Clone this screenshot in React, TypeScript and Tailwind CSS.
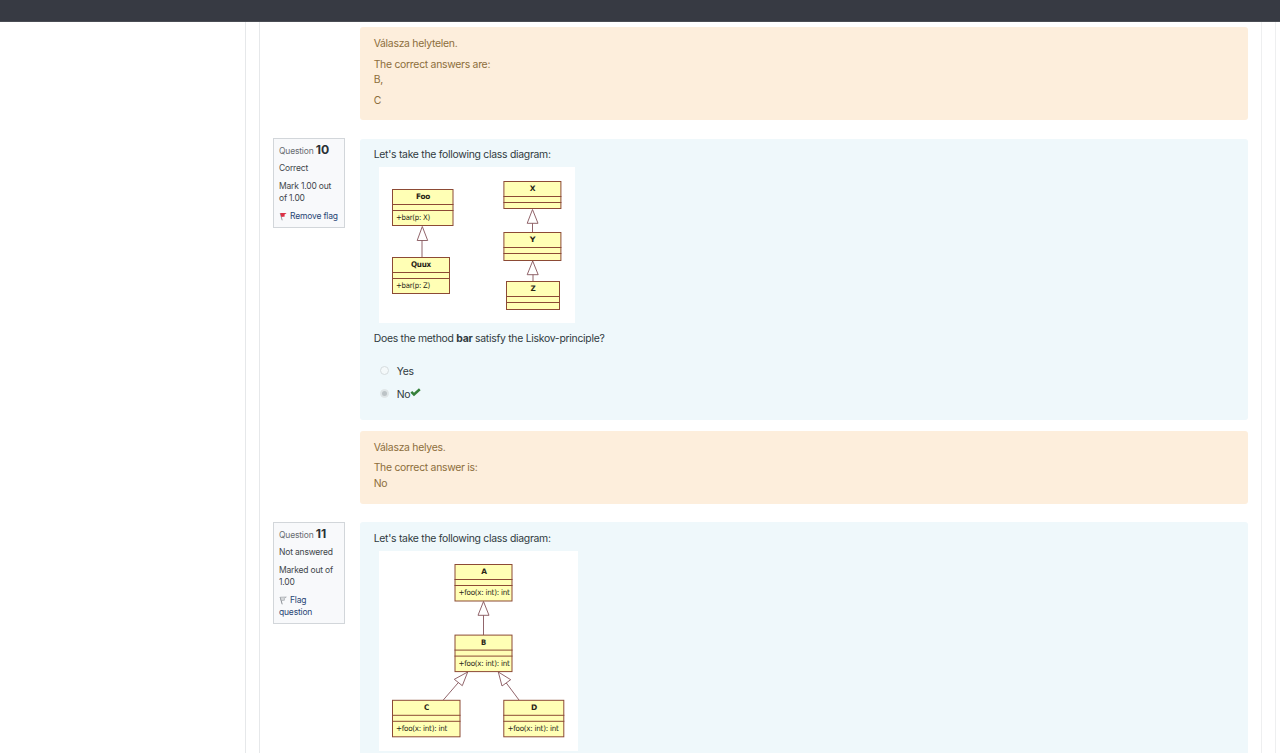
import type { ReactNode } from "react";

type BoxProps = {
  x: number;
  y: number;
  w: number;
  h: number;
  name: string;
  nameX: number;
  nameW: number;
  method?: string;
  methodX?: number;
  methodW?: number;
};

function ClassBox({ x, y, w, h, name, nameX, nameW, method, methodX, methodW }: BoxProps) {
  return (
    <g>
      <g stroke="#8c4a35" strokeWidth="1">
        <rect x={x + 0.5} y={y + 0.5} width={w} height={h} fill="#ffffb5" />
        <path d={`M${x} ${y + 15.5}h${w + 1}M${x} ${y + 21.5}h${w + 1}`} />
      </g>
      <g fill="#292515" fontFamily="'DejaVu Sans', sans-serif">
        <text x={nameX} y={y + 10.2} fontSize="7.7" fontWeight="700" textAnchor="middle" textLength={nameW} lengthAdjust="spacingAndGlyphs">
          {name}
        </text>
        {method && (
          <text x={methodX} y={y + 31.2} fontSize="7.7" textLength={methodW} lengthAdjust="spacingAndGlyphs">
            {method}
          </text>
        )}
      </g>
    </g>
  );
}

function BarDiagram() {
  return (
    <svg width="196" height="156" viewBox="379 167 196 156" className="block bg-white">
      <g fill="#fff" stroke="#85545a" strokeWidth="0.9">
        <path d="M422.3 226.5L427.7 240.5H417.2ZM422 240.5V257" />
        <path d="M532.5 209.5L538 223.3H527.2ZM532.5 223.3V233" />
        <path d="M532.7 261L538.2 274.7H527.2ZM533 274.7V281" />
      </g>
      <ClassBox x={392} y={189} w={60.5} h={36} name="Foo" nameX={423} nameW={14} method="+bar(p: X)" methodX={396} methodW={34} />
      <ClassBox x={392} y={257} w={57} h={36} name="Quux" nameX={421} nameW={20} method="+bar(p: Z)" methodX={396} methodW={34} />
      <ClassBox x={503.4} y={181} w={57} h={27} name="X" nameX={532.5} nameW={5.5} />
      <ClassBox x={503.4} y={232} w={57} h={28} name="Y" nameX={532.5} nameW={5.5} />
      <ClassBox x={506} y={281} w={53} h={28} name="Z" nameX={533} nameW={5} />
    </svg>
  );
}

function FooDiagram() {
  return (
    <svg width="199" height="200" viewBox="379 551 199 200" className="block bg-white">
      <g fill="#fff" stroke="#85545a" strokeWidth="0.9">
        <path d="M483.5 601.5L489 615.3H478ZM483.5 615.3V635" />
        <path d="M467.7 672L454.3 679.3L462.3 685.7ZM458.4 682.5L443.3 700" />
        <path d="M498.3 672L502 686L510.7 679.7ZM506.3 683L519 700" />
      </g>
      <ClassBox x={454.5} y={564} w={57} h={36.5} name="A" nameX={484} nameW={5.5} method="+foo(x: int): int" methodX={458.5} methodW={51} />
      <ClassBox x={454.5} y={634.6} w={57} h={36.5} name="B" nameX={483.5} nameW={5} method="+foo(x: int): int" methodX={458.5} methodW={51} />
      <ClassBox x={392} y={699.8} w={67.5} h={36.5} name="C" nameX={426.5} nameW={5} method="+foo(x: int): int" methodX={396} methodW={51} />
      <ClassBox x={503.3} y={699.8} w={60} h={36.5} name="D" nameX={534} nameW={6} method="+foo(x: int): int" methodX={507.5} methodW={51} />
    </svg>
  );
}

function Flag({ active }: { active: boolean }) {
  return (
    <svg width="8" height="9" viewBox="0 0 8 9" className="mr-[3px] inline-block align-[-2px]">
      <path d="M1.2 1.2L3.2 8.3" stroke={active ? "#9999a0" : "#8b8f95"} strokeWidth="1" fill="none" />
      {active ? (
        <path d="M1.2 1L7.6 1L5.4 2.7L5.8 4.5L2.4 4.9Z" fill="#dc3045" />
      ) : (
        <path d="M1.2 1.2L7.3 1L5.2 2.5L5.5 4.2L2.3 4.6Z" fill="#d8dadd" stroke="#999da3" strokeWidth="0.6" />
      )}
    </svg>
  );
}

type InfoProps = { number: string; state: string; mark: ReactNode; flagged: boolean; flagLabel: ReactNode };

function QuestionInfo({ number, state, mark, flagged, flagLabel }: InfoProps) {
  return (
    <aside className="-mt-[0.4px] w-[72px] shrink-0 self-start border border-[#d2d6da] bg-[#f8f9fb] pt-[4px] pb-[5px] pl-[5px] text-[8.5px] leading-[12px] tracking-[-0.18px] text-[#41464b]">
      <h3 className="h-[14px] text-[8.5px] leading-[14px] whitespace-nowrap text-[#686d72]">
        Question <span className="text-[12.2px] font-bold tracking-normal text-[#2b3035]">{number}</span>
      </h3>
      <p className="mt-[5px] whitespace-nowrap">{state}</p>
      <p className="mt-[6px] whitespace-nowrap">{mark}</p>
      <p className="mt-[6px] whitespace-nowrap text-[#294675]">
        <Flag active={flagged} />
        {flagLabel}
      </p>
    </aside>
  );
}

function Feedback({ children, className }: { children: ReactNode; className: string }) {
  return (
    <div className={`rounded-[3px] bg-[#fdeedc] pr-[13px] pl-[13.7px] leading-[15.5px] text-[#8c6d3b] ${className}`}>{children}</div>
  );
}

function Radio({ checked }: { checked: boolean }) {
  return (
    <span
      className={`-mt-px flex size-[9px] items-center justify-center rounded-full border ${
        checked ? "border-[#e0e6e8] bg-[#dfe5e7]" : "border-[#d6dcde] bg-[#f4f9fa]"
      }`}
    >
      {checked && <span className="size-[5px] rounded-full bg-[#bcc3c6]" />}
    </span>
  );
}

export default function App() {
  return (
    <div className="flex h-[753px] w-[1280px] flex-col overflow-hidden bg-white font-[Inter,sans-serif] text-[10.4px] tracking-[-0.27px] text-[#303a40]">
      <header className="h-[22px] shrink-0 border-b border-[#4a4d54] bg-[#373a43]" />
      <div className="flex min-h-0 flex-1 pr-[4px] pl-[245px]">
        <div className="flex flex-1 border-x border-r-[#eeeff0] border-l-[#e6e8ea] px-[13px]">
          <main className="min-w-0 flex-1 border-x border-r-[#eeeff0] border-l-[#e6e8ea] pr-[13px] pl-[13px]">
            <div className="pt-[5px] pl-[87px]">
              <Feedback className="h-[93px] pt-[9px]">
                <p>Válasza helytelen.</p>
                <p className="mt-[5px]">The correct answers are:</p>
                <p>B,</p>
                <p className="mt-[5px]">C</p>
              </Feedback>
            </div>

            <section className="mt-[18.5px] flex gap-[15px]">
              <QuestionInfo number="10" state="Correct" mark={<>Mark 1.00 out<br />of 1.00</>} flagged flagLabel="Remove flag" />
              <div className="min-w-0 flex-1">
                <div className="h-[281.5px] rounded-[3px] bg-[#eff8fb] px-[13.7px] pt-[8.4px]">
                  <p className="leading-[15px]">Let's take the following class diagram:</p>
                  <div className="mt-[5.1px] ml-[5.3px]">
                    <BarDiagram />
                  </div>
                  <p className="mt-[8px] leading-[15px]">
                    Does the method <b className="font-bold">bar</b> satisfy the Liskov-principle?
                  </p>
                  <div className="mt-[18px] ml-[6px] flex h-[15px] items-center gap-[8px]">
                    <Radio checked={false} />
                    <span>Yes</span>
                  </div>
                  <div className="mt-[8px] ml-[6px] flex h-[15px] items-center gap-[8px]">
                    <Radio checked />
                    <span className="flex items-center">
                      No
                      <svg width="11" height="9" viewBox="0 0 11 9" className="-mt-[4px] -ml-[0.7px]">
                        <path d="M1.3 3.9L4 6.5L9.8 1.3" stroke="#35803a" strokeWidth="2.5" fill="none" />
                      </svg>
                    </span>
                  </div>
                </div>
                <Feedback className="mt-[11px] h-[72.5px] pt-[8.5px]">
                  <p>Válasza helyes.</p>
                  <p className="mt-[5px]">The correct answer is:</p>
                  <p>No</p>
                </Feedback>
              </div>
            </section>

            <section className="mt-[18.5px] flex gap-[15px] pt-[0.4px]">
              <QuestionInfo number="11" state="Not answered" mark={<>Marked out of<br />1.00</>} flagged={false} flagLabel={<>Flag<br />question</>} />
              <div className="h-[260px] min-w-0 flex-1 rounded-[3px] bg-[#eff8fb] px-[13.7px] pt-[8.6px]">
                <p className="leading-[15px]">Let's take the following class diagram:</p>
                <div className="mt-[5px] ml-[5.3px]">
                  <FooDiagram />
                </div>
              </div>
            </section>
          </main>
        </div>
      </div>
    </div>
  );
}
